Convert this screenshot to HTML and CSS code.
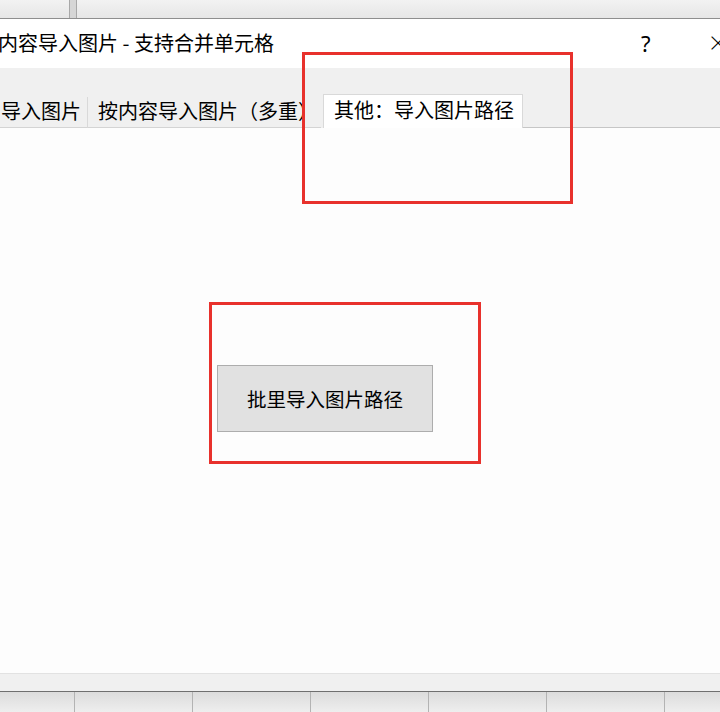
FILE: index.html
```html
<html lang="zh-CN">
<head>
    <meta charset="UTF-8">
    <meta name="viewport" content="width=device-width, initial-scale=1.0">
    <title>按内容导入图片 - 支持合并单元格</title>
    <link rel="stylesheet" href="styles.css">
</head>
<body>
    <div class="sheet-top">
        <div class="sheet-col first"></div>
        <div class="splitter"></div>
        <div class="sheet-col"></div>
    </div>
    <div class="dialog">
        <div class="titlebar">
            <span class="title">内容导入图片 - 支持合并单元格</span>
            <span class="help">?</span>
            <span class="close">×</span>
        </div>
        <div class="tabs">
            <div class="tab first">导入图片</div>
            <div class="tab second">按内容导入图片（多重）</div>
            <div class="tab active">其他：导入图片路径</div>
            <div class="tab-rest"></div>
        </div>
        <div class="content">
            <button class="btn" type="button">批里导入图片路径</button>
        </div>
        <div class="status"></div>
    </div>
    <div class="sheet-bottom">
        <div class="cell" style="width: 74px"></div>
        <div class="cell"></div>
        <div class="cell"></div>
        <div class="cell"></div>
        <div class="cell"></div>
        <div class="cell"></div>
        <div class="cell last"></div>
    </div>

    <!-- annotation boxes -->
    <div class="mark mark-tab"></div>
    <div class="mark mark-btn"></div>
</body>
</html>
```

FILE: styles.css
```css
body {
    margin: 0;
    width: 720px;
    height: 712px;
    overflow: hidden;
    position: relative;
    font-family: "Noto Sans CJK SC", "Microsoft YaHei", sans-serif;
    color: #000;
    background: #fdfdfd;
}
.sheet-top {
    display: flex;
    height: 18px;
    background: #ececec;
    border-bottom: 1px solid #8e8e8e;
}
.sheet-col {
    flex: 1;
    background: linear-gradient(#f2f2f2, #e6e6e6);
}
.sheet-col.first {
    flex: none;
    width: 69px;
}
.splitter {
    width: 6px;
    background: #d6d6d6;
    border-left: 1px solid #a8a8a8;
    border-right: 1px solid #a8a8a8;
}
.dialog {
    display: flex;
    flex-direction: column;
    height: 673px;
}
.titlebar {
    display: flex;
    align-items: center;
    height: 49px;
    background: #fff;
    font-size: 20px;
}
.title {
    flex: 1;
    margin-left: -2px;
    padding-bottom: 2px;
    white-space: nowrap;
}
.help {
    width: 68px;
    font-family: "Noto Sans", sans-serif;
    font-size: 22px;
    padding-bottom: 2px;
}
.close {
    width: 11px;
    overflow: hidden;
    font-family: "Noto Sans", sans-serif;
    font-size: 32px;
    font-weight: 200;
    line-height: 1;
    padding-bottom: 4px;
}
.tabs {
    display: flex;
    align-items: flex-end;
    height: 60px;
    background: #f0f0f0;
    font-size: 20px;
}
.tab {
    height: 30px;
    line-height: 28px;
    white-space: nowrap;
    overflow: hidden;
    border-bottom: 1px solid #d4d4d4;
}
.tab.first {
    width: 86px;
    padding-left: 1px;
    border-right: 1px solid #d9d9d9;
}
.tab.second {
    width: 223px;
    padding-left: 10px;
}
.tab.active {
    width: 188px;
    height: 33px;
    line-height: 30px;
    padding-left: 10px;
    margin-left: 2px;
    background: #fff;
    border: 1px solid #d9d9d9;
    border-bottom: none;
}
.tab-rest {
    flex: 1;
    border-bottom: 1px solid #c6c6c6;
}
.content {
    flex: 1;
    background: #fdfdfd;
    padding: 237px 0 0 217px;
}
.btn {
    width: 216px;
    height: 67px;
    background: #e1e1e1;
    border: 1px solid #adadad;
    font-family: "Noto Sans CJK SC", sans-serif;
    font-size: 19.5px;
    color: #000;
    padding: 0;
}
.status {
    height: 17px;
    background: #f0f0f0;
    border-top: 1px solid #e2e2e2;
    border-bottom: 1px solid #6f6f6f;
}
.sheet-bottom {
    display: flex;
    height: 20px;
    background: linear-gradient(#dcdcdc, #eeeeee);
}
.cell {
    width: 117px;
    border-right: 1px solid #b3b3b3;
}
.cell.last {
    flex: 1;
    border-right: none;
}
.mark {
    position: absolute;
    border: 3px solid #e8312c;
}
.mark-tab {
    left: 302px;
    top: 52px;
    width: 265px;
    height: 146px;
}
.mark-btn {
    left: 209px;
    top: 302px;
    width: 266px;
    height: 156px;
}
```
